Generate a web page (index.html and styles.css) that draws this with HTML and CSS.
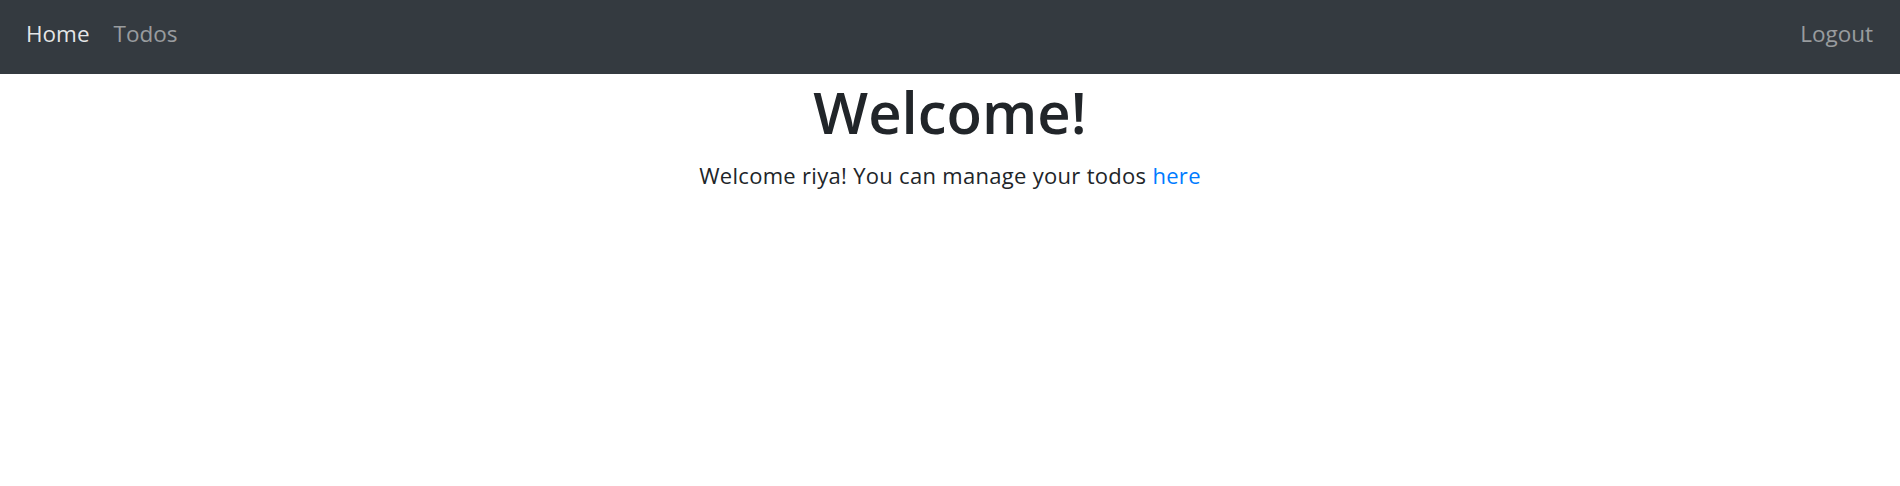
FILE: index.html
```html
<!DOCTYPE html>
<html lang="en">
<head>
<meta charset="utf-8">
<title>Welcome</title>
<link rel="stylesheet" href="styles.css">
</head>
<body>
<nav class="navbar">
  <div class="nav-left">
    <a class="nav-link active" href="#">Home</a>
    <a class="nav-link" href="#">Todos</a>
  </div>
  <div class="nav-right">
    <a class="nav-link" href="#">Logout</a>
  </div>
</nav>
<main class="container">
  <h1 class="title">Welcome!</h1>
  <p class="lead">Welcome riya! You can manage your todos <a class="link" href="#">here</a></p>
</main>
</body>
</html>
```
FILE: styles.css
```css
* { box-sizing: border-box; }
html, body { margin: 0; padding: 0; background: #fff; }
body {
  font-family: "Open Sans", "Noto Sans", sans-serif;
  color: #212529;
}
.navbar {
  height: 74px;
  background: #343a40;
  display: flex;
  align-items: center;
  justify-content: space-between;
  padding: 0 15px 8px 14px;
}
.nav-left, .nav-right { display: flex; align-items: center; }
.nav-link {
  font-size: 22.5px;
  color: rgba(255,255,255,0.5);
  text-decoration: none;
  padding: 0 12px;
}
.nav-link.active { color: rgba(255,255,255,0.88); }
.container {
  text-align: center;
}
.title {
  margin: 3px 0 0 0;
  font-size: 58px;
  font-weight: 600;
  line-height: 1.2;
}
.lead {
  margin: 12px 0 0 0;
  font-size: 22px;
  letter-spacing: 0.3px;
  line-height: 1.5;
}
.link { color: #007bff; text-decoration: none; }
```
